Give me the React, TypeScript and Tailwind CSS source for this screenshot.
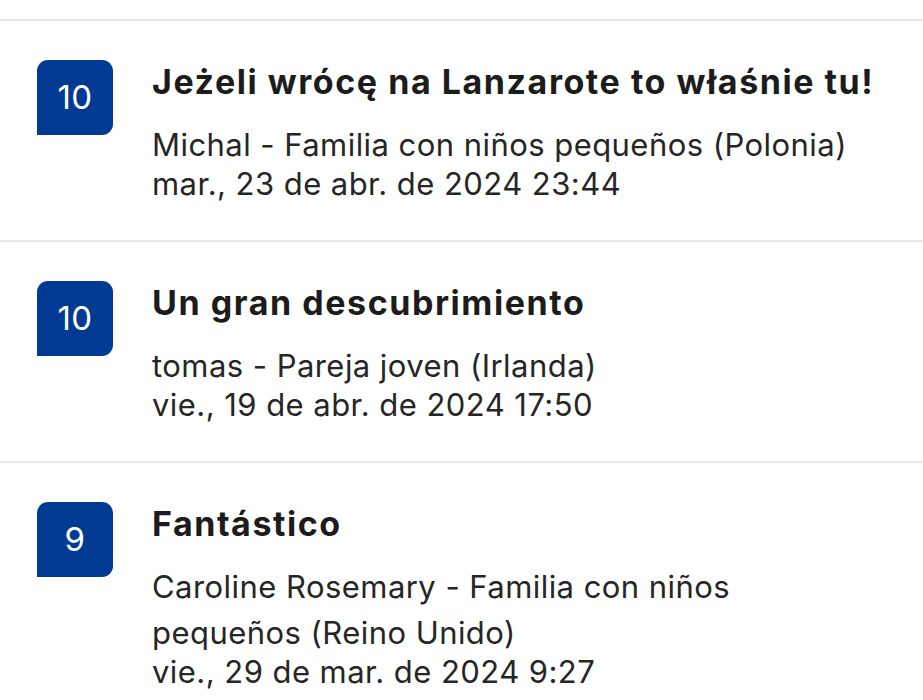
import React from "react";

const reviews = [
  {
    score: "10",
    title: "Jeżeli wrócę na Lanzarote to właśnie tu!",
    sub: "Michal - Familia con niños pequeños (Polonia)",
    date: "mar., 23 de abr. de 2024 23:44",
  },
  {
    score: "10",
    title: "Un gran descubrimiento",
    sub: "tomas - Pareja joven (Irlanda)",
    date: "vie., 19 de abr. de 2024 17:50",
  },
  {
    score: "9",
    title: "Fantástico",
    sub: "Caroline Rosemary - Familia con niños pequeños (Reino Unido)",
    date: "vie., 29 de mar. de 2024 9:27",
  },
];

export default function App() {
  return (
    <div
      className="w-[923px] h-[700px] overflow-hidden bg-white"
      style={{ fontFamily: "Inter, 'Noto Sans', sans-serif" }}
    >
      <div className="h-[19px]" />
      {reviews.map((r, i) => (
        <div key={i}>
          <div className="h-[2px] bg-[#e8e8e8]" />
          <div className="flex pl-[37px] pt-[39px] pb-[40px]">
            <div className="w-[76px] h-[75px] shrink-0 bg-[#003a93] rounded-[11px] rounded-bl-none flex items-center justify-center text-white text-[33px] leading-none tracking-[0.5px]">
              {r.score}
            </div>
            <div className="ml-[39px] w-[730px]">
              <div className="whitespace-nowrap text-[34px] font-bold leading-[44px] tracking-[1.55px] text-[#1c1c1c]">
                {r.title}
              </div>
              <div className="mt-[18px] w-[705px] text-[31px] leading-[46px] tracking-[0.45px] text-[#262626]">
                {r.sub}
              </div>
              <div className="text-[31px] leading-[32px] tracking-[0.45px] text-[#262626]">
                {r.date}
              </div>
            </div>
          </div>
        </div>
      ))}
    </div>
  );
}
